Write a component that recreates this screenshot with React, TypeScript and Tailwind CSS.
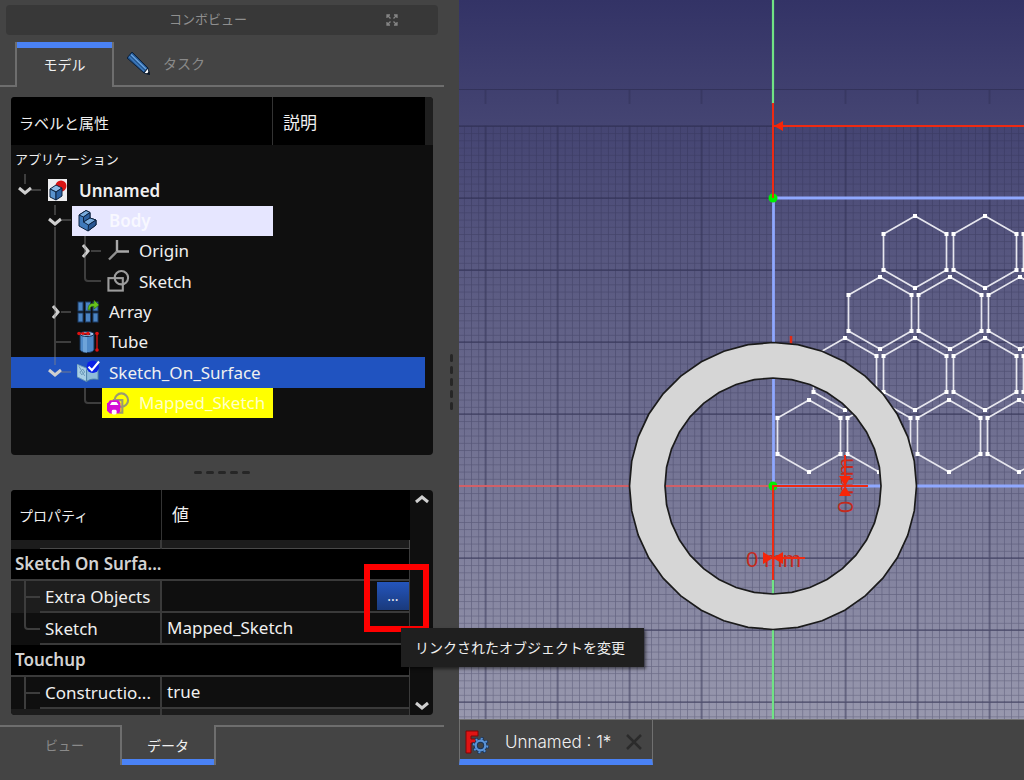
import type { ReactNode } from 'react';

const UI = "font-['Noto_Sans','Noto_Sans_CJK_JP',sans-serif]";

/* ---------- icons ---------- */

function Cube({ x = 0, y = 0 }: { x?: number; y?: number }) {
  return (
    <g transform={`translate(${x} ${y})`} stroke="#0d2340" strokeWidth="1" strokeLinejoin="round">
      <path d="M0 4 6 0 12 3 6 7Z" fill="#8dbbe6" />
      <path d="M0 4 6 7V15L0 12Z" fill="#5a93ce" />
      <path d="M6 7 12 3V11L6 15Z" fill="#2c62a3" />
    </g>
  );
}

function DocIcon() {
  return (
    <svg width="22" height="24" viewBox="0 0 22 24" aria-hidden="true">
      <rect x="1" y="1" width="19" height="22" fill="#eeeef0" />
      <circle cx="14" cy="8" r="5.500" fill="#d81414" />
      <Cube x={3} y={7} />
    </svg>
  );
}

function BodyIcon() {
  return (
    <svg width="22" height="24" viewBox="0 0 22 24" aria-hidden="true">
      <g stroke="#0d2340" strokeLinejoin="round">
        <path d="M2 6 9 1.500 13 3.500V9L19 11V16L11 22 2 17Z" fill="#3f79ba" />
        <path d="M2 6 9 1.500 13 3.500 6.500 8Z" fill="#79abdc" />
        <path d="M6.500 8 13 3.500V9L6.500 13Z" fill="#2c5f9e" />
        <path d="M6.500 13 13 9 19 11 11.500 16Z" fill="#79abdc" />
        <path d="M11.500 16 19 11V16L11 22Z" fill="#2a5793" />
      </g>
    </svg>
  );
}

function OriginIcon() {
  return (
    <svg width="22" height="24" viewBox="0 0 22 24" aria-hidden="true">
      <path d="M10 1V12.500M10 12.500H22" fill="none" stroke="#a8a8a8" strokeWidth="2.400" />
      <path d="M10 12.500 2 20.500" fill="none" stroke="#909090" strokeWidth="2.400" />
    </svg>
  );
}

function SketchIcon() {
  return (
    <svg width="24" height="24" viewBox="0 0 24 24" aria-hidden="true" fill="none" stroke="#9c9c9c" strokeWidth="2.200">
      <rect x="1.500" y="9" width="15" height="13" />
      <circle cx="15" cy="8.500" r="7" />
    </svg>
  );
}

function MappedIcon() {
  return (
    <svg width="24" height="24" viewBox="0 0 24 24" aria-hidden="true">
      <g fill="none" stroke="#9a9a70" strokeWidth="2.200">
        <path d="M6 9H16V22H12" />
        <circle cx="15" cy="9" r="7" />
      </g>
      <path d="M1 12 3 9H12L14 12V20L12 23H3L0 20V12Z" fill="#d40cd4" />
      <path d="M3 14 5 11H10L12 14Z" fill="#fff" />
      <rect x="5" y="19" width="5" height="5" rx="1.500" fill="#fff" />
    </svg>
  );
}

function ArrayIcon() {
  return (
    <svg width="22" height="24" viewBox="0 0 22 24" aria-hidden="true">
      <g fill="#4b84c4" stroke="#1d3c66">
        <rect x="1" y="2" width="5" height="9" />
        <rect x="8.500" y="2" width="5" height="9" />
        <rect x="16" y="2" width="5" height="9" />
        <rect x="1" y="13" width="5" height="9" />
        <rect x="8.500" y="13" width="5" height="9" />
        <rect x="16" y="13" width="5" height="9" />
      </g>
      <path d="M11 10C11 5 13 3 17 3.500V0L22 5 17 9V6.500C14 6 13 7 13 10Z" fill="#66c31a" stroke="#2b5e06" strokeWidth=".6" />
    </svg>
  );
}

function TubeIcon() {
  return (
    <svg width="22" height="24" viewBox="0 0 22 24" aria-hidden="true">
      <path d="M3 4V20C5 23.500 15 23.500 17 20V4Z" fill="#4f89c8" stroke="#163256" />
      <path d="M6 6V22L10 23V6Z" fill="#84b4e4" opacity=".6" />
      <ellipse cx="10" cy="4" rx="7" ry="2.500" fill="#9fc4ea" stroke="#163256" />
      <ellipse cx="10" cy="4" rx="3.500" ry="1.200" fill="#15253b" />
      <path d="M1 3.500H12M20 3.500V20" stroke="#dd1111" strokeWidth="1.300" />
      <g fill="#dd1111">
        <circle cx="2" cy="3.500" r="1.800" />
        <circle cx="6" cy="3.500" r="1.500" />
        <circle cx="11" cy="3.500" r="1.800" />
        <circle cx="20" cy="3.500" r="1.800" />
        <circle cx="20" cy="20" r="1.800" />
      </g>
    </svg>
  );
}

function SurfaceIcon() {
  return (
    <svg width="24" height="24" viewBox="0 0 24 24" aria-hidden="true">
      <path d="M0 4 10 8V22L0 17Z" fill="#a9cfe6" stroke="#6c9bb8" />
      <path d="M10 10C14 7 18 8 22 9V20C18 19 14 19 10 22Z" fill="#8fbcda" stroke="#4d80a5" />
      <path d="M2 6 8 16M3 12 6 9 8 12 5 15Z" fill="none" stroke="#6795b5" />
      <circle cx="16.500" cy="6.500" r="6.500" fill="#0b22e6" />
      <path d="M12 6.500 15.500 10 23 1" fill="none" stroke="#fff" strokeWidth="2.200" />
    </svg>
  );
}

function PencilIcon() {
  return (
    <svg width="24" height="24" viewBox="0 0 24 24" aria-hidden="true">
      <g stroke="#0c1f38" strokeLinejoin="round">
        <path d="M0 6 5 0 21 16 17 21Z" fill="#24568f" />
        <path d="M17 21 21 16 22.500 22.500Z" fill="#fff" />
      </g>
      <path d="M4 2.500 19 17" stroke="#6aa4e0" strokeWidth="1.500" />
      <path d="M2 4.500 17 19" stroke="#3f7cc0" strokeWidth="1.200" />
      <path d="M19.500 22 22.300 19 23 23Z" fill="#0c1420" />
    </svg>
  );
}

function FreeCadIcon() {
  return (
    <svg width="24" height="24" viewBox="0 0 24 24" aria-hidden="true">
      <path d="M1 1H13V6H6V9H11V13H6V23H1Z" fill="#e01414" stroke="#7c0606" />
      <g fill="none" stroke="#16345c">
        <circle cx="15.500" cy="15.500" r="6.800" strokeWidth="3.400" strokeDasharray="2.700 2.640" />
        <circle cx="15.500" cy="15.500" r="4.800" strokeWidth="4" />
      </g>
      <g fill="none" stroke="#5b93d6">
        <circle cx="15.500" cy="15.500" r="6.800" strokeWidth="2" strokeDasharray="2 3.340" />
        <circle cx="15.500" cy="15.500" r="4.800" strokeWidth="2.200" />
      </g>
    </svg>
  );
}

function FloatIcon() {
  return (
    <svg width="12" height="12" viewBox="0 0 12 12" aria-hidden="true" fill="none" stroke="#858585" strokeWidth="1.300">
      <path d="M1 4V1H4M1 1 4.500 4.500M8 1H11V4M11 1 7.500 4.500M1 8V11H4M1 11 4.500 7.500M11 8V11H8M11 11 7.500 7.500" />
    </svg>
  );
}

function Chevron({ dir }: { dir: 'up' | 'down' | 'right' }) {
  const paths = { up: 'M2 10 8 5 14 10', down: 'M2 6 8 11 14 6', right: 'M6 2 11 8 6 14' };
  return (
    <svg width="16" height="16" viewBox="0 0 16 16" aria-hidden="true">
      <path d={paths[dir]} fill="none" stroke="#cfcfcf" strokeWidth="3" />
    </svg>
  );
}

/* ---------- model tree ---------- */

type TreeNodeProps = {
  label: string;
  icon: ReactNode;
  indent: string;
  chevron?: 'down' | 'right';
  row?: string;
  cell?: string;
};

function TreeNode({ label, icon, indent, chevron, row = '', cell = '' }: TreeNodeProps) {
  return (
    <div role="treeitem" className={`mr-[8px] flex ${row}`}>
      <div className={`flex w-[262px] ${indent}`}>
        <div className="mr-[3px] flex w-7 shrink-0 items-center justify-center">
          {chevron && (
            <button type="button" aria-label={`${label} 展開`} className="relative">
              <Chevron dir={chevron} />
            </button>
          )}
        </div>
        <div className={`flex min-w-0 flex-1 items-center gap-[9px] pl-[5px] whitespace-nowrap ${cell}`}>
          <span className="flex w-[23px] shrink-0">{icon}</span>
          {label}
        </div>
      </div>
    </div>
  );
}

function ModelTree() {
  return (
    <section className="mr-[11px] ml-[11px] h-[358px] overflow-hidden rounded bg-[#0f0f0f]">
      <div className="flex h-12 bg-[#1f1f1f] pr-[8px] text-[15px]">
        <div className="flex w-[262px] items-center border-r border-[#333] bg-black pt-1 pl-2">ラベルと属性</div>
        <div className="flex flex-1 items-center bg-black pt-1 pl-[10px] text-[17px]">説明</div>
      </div>
      <div role="tree" aria-label="モデルツリー" className="relative grid h-[273px] grid-rows-9 text-[17px]">
        <div className="flex items-center pl-1 text-[13px]">アプリケーション</div>
        <TreeNode label="Unnamed" icon={<DocIcon />} indent="pl-0" chevron="down" cell="font-semibold" />
        <TreeNode
          label="Body"
          icon={<BodyIcon />}
          indent="pl-[30px]"
          chevron="down"
          cell="bg-[#e6e6ff] font-semibold text-[#f8f8ff]"
        />
        <TreeNode label="Origin" icon={<OriginIcon />} indent="pl-[60px]" chevron="right" />
        <TreeNode label="Sketch" icon={<SketchIcon />} indent="pl-[60px]" />
        <TreeNode label="Array" icon={<ArrayIcon />} indent="pl-[30px]" chevron="right" />
        <TreeNode label="Tube" icon={<TubeIcon />} indent="pl-[30px]" />
        <TreeNode
          label="Sketch_On_Surface"
          icon={<SurfaceIcon />}
          indent="pl-[30px]"
          chevron="down"
          row="bg-[#2053c0]"
        />
        <TreeNode
          label="Mapped_Sketch"
          icon={<MappedIcon />}
          indent="pl-[60px]"
          cell="bg-[#ffff00] text-[#ffffc8]"
        />
        <svg
          className="pointer-events-none absolute top-0 left-0"
          width="120"
          height="273"
          aria-hidden="true"
          fill="none"
          stroke="#858585"
          strokeOpacity=".4"
          strokeWidth="2"
        >
          <path d="M14 29V39M20 45H30M44 60V70M44 82V220M51 75H60M50 167H60M44 197H60M50 227H60M74 91V133Q74 136 77 136H90M80 106H90M74 243V255Q74 258 77 258H90" />
        </svg>
      </div>
    </section>
  );
}

/* ---------- property editor ---------- */

function PropRow({ name, value, last, shade = '' }: { name: string; value: ReactNode; last?: boolean; shade?: string }) {
  return (
    <tr className="h-8">
      <th scope="row" className={`relative border-r-2 border-[#3a3a3a] p-0 text-left font-normal ${shade}`}>
        <svg
          className="absolute top-0 left-[13px]"
          width="18"
          height="32"
          aria-hidden="true"
          fill="none"
          stroke="#3d3d3d"
          strokeWidth="2"
        >
          <path d={last ? 'M1 0V13Q1 16 4 16H16' : 'M1 0V32M1 16H16'} />
        </svg>
        <div className="ml-[29px] h-8 truncate border-b-2 border-[#3a3a3a] pl-[5px] leading-8">{name}</div>
      </th>
      <td className="border-r border-b-2 border-[#3a3a3a] p-0 pl-[5px]">{value}</td>
    </tr>
  );
}

function GroupRow({ name }: { name: string }) {
  return (
    <tr className="h-8">
      <th
        colSpan={2}
        scope="colgroup"
        className="border-r border-b-2 border-[#3a3a3a] bg-black p-0 pl-1 text-left font-semibold text-[#d2d2d2]"
      >
        <div className="w-[148px] truncate">{name}</div>
      </th>
    </tr>
  );
}

function PropertyEditor() {
  return (
    <section className="relative mr-[11px] ml-[11px]">
      <div className="flex h-[225px] overflow-hidden rounded bg-[#0f0f0f]">
        <table className="h-fit w-[399px] table-fixed border-separate border-spacing-0 text-[17px]">
          <colgroup>
            <col className="w-[151px]" />
            <col />
          </colgroup>
          <thead>
            <tr className="h-[50px] bg-black">
              <th className="border-r border-[#333] p-0 pl-2 text-left text-[14px] font-normal">プロパティ</th>
              <th className="p-0 pl-[10px] text-left font-normal">値</th>
            </tr>
          </thead>
          <tbody>
            <tr className="h-[9px] bg-[#1c1c1c]">
              <td className="border-r-2 border-[#3a3a3a] p-0">
                <div className="ml-[29px] h-[9px] border-b border-[#4a4a4a]" />
              </td>
              <td className="border-r border-b border-[#4a4a4a] p-0" />
            </tr>
            <GroupRow name="Sketch On Surfa..." />
            <PropRow
              name="Extra Objects"
              shade="bg-[#1d1d1d]"
              value={
                <button
                  type="button"
                  aria-label="リンクされたオブジェクトを変更"
                  className="ml-auto block h-7 w-8 bg-linear-to-b from-[#2455bd] to-[#1a3a7c] text-[14px] leading-7"
                >
                  ...
                </button>
              }
            />
            <PropRow name="Sketch" value="Mapped_Sketch" last />
            <GroupRow name="Touchup" />
            <PropRow name="Constructio..." value="true" />
            <tr className="h-2 bg-[#1c1c1c]">
              <td className="border-r-2 border-[#3a3a3a] p-0" />
              <td className="border-r border-[#3a3a3a] p-0" />
            </tr>
          </tbody>
        </table>
        <div className="flex flex-1 flex-col items-center justify-between py-[2px]">
          <button type="button" aria-label="上へスクロール">
            <Chevron dir="up" />
          </button>
          <button type="button" aria-label="下へスクロール">
            <Chevron dir="down" />
          </button>
        </div>
      </div>
      <div className="pointer-events-none absolute top-[74px] left-[353px] h-[68px] w-[65px] border-[6px] border-[#ff0000]" />
      <div
        role="tooltip"
        className="absolute top-[138px] left-[390px] z-10 flex h-[39px] w-[243px] items-center bg-[#1f1f1f] pl-[14px] text-[14px] whitespace-nowrap shadow-[2px_2px_3px_rgba(0,0,0,0.5)]"
      >
        リンクされたオブジェクトを変更
      </div>
    </section>
  );
}

/* ---------- 3D view ---------- */

const CX = 773;
const CY = 486;

const ringPolygon = (r: number) =>
  'M' +
  Array.from({ length: 36 }, (_, i) => {
    const a = (i * Math.PI) / 18;
    return `${(CX + r * Math.cos(a)).toFixed(1)} ${(CY + r * Math.sin(a)).toFixed(1)}`;
  }).join('L') +
  'Z';

const hexRows = [
  { x: 915, y: 252, n: 8 },
  { x: 880, y: 313, n: 8 },
  { x: 845, y: 374, n: 9 },
  { x: 809, y: 436, n: 9 },
];

function Hexagon({ x, y }: { x: number; y: number }) {
  const pts = [
    [x, y - 36],
    [x + 31.5, y - 18],
    [x + 31.5, y + 18],
    [x, y + 36],
    [x - 31.5, y + 18],
    [x - 31.5, y - 18],
  ];
  return (
    <g>
      <polygon points={pts.map((p) => p.join(',')).join(' ')} fill="none" stroke="#e6e6ee" strokeWidth="1.700" />
      {pts.map(([px, py], i) => (
        <rect key={i} x={px - 2} y={py - 2} width="4" height="4" fill="#fff" />
      ))}
    </g>
  );
}

function Viewport() {
  return (
    <svg className="block min-h-[719px] w-full flex-1" role="img" aria-label="3Dビュー">
      <defs>
        <linearGradient id="sky" x1="0" y1="0" x2="0" y2="1">
          <stop offset="0" stopColor="#333366" />
          <stop offset="1" stopColor="#9898ae" />
        </linearGradient>
        <pattern id="minor" x="773.500" y="126" width="7.200" height="7.200" patternUnits="userSpaceOnUse">
          <path d="M0 0H7.200M0 0V7.200" stroke="#28284a" strokeOpacity=".38" strokeWidth="1.400" />
        </pattern>
        <pattern id="major" x="737.500" y="90" width="72" height="72" patternUnits="userSpaceOnUse">
          <path d="M36 0V72M0 36H72" stroke="#28284a" strokeOpacity=".5" strokeWidth="1.400" />
        </pattern>
        <pattern id="ticks" x="737.500" y="90" width="72" height="14" patternUnits="userSpaceOnUse">
          <path d="M36 0V14" stroke="#28284a" strokeOpacity=".55" strokeWidth="1.300" />
        </pattern>
      </defs>
      <rect width="100%" height="100%" fill="url(#sky)" />
      <g transform="translate(-459 0)">
        <rect x="459" y="126" width="3000" height="2000" fill="url(#minor)" />
        <rect x="459" y="125" width="3000" height="2000" fill="url(#major)" />
        <rect x="459" y="90" width="3000" height="14" fill="url(#ticks)" />
        <path d="M459 89.500H3000" stroke="#28284a" strokeOpacity=".55" />

        <path d="M459 486H773" stroke="#d06068" strokeWidth="1.800" />
        <path d="M773 0V104M773 580V2000" stroke="#70e484" strokeWidth="2.200" />
        {hexRows.flatMap((r) =>
          Array.from({ length: r.n }, (_, i) => <Hexagon key={`${r.y}-${i}`} x={r.x + i * 70} y={r.y} />),
        )}
        <path d="M3000 198H773.500V486H3000" fill="none" stroke="#8fa8ff" strokeWidth="2.800" />
        <path d="M791 336V344" stroke="#e22a14" strokeWidth="2.500" />

        <path d={ringPolygon(143.5) + ringPolygon(108)} fillRule="evenodd" fill="#d6d6d6" stroke="#1b1b1b" strokeWidth="1.700" />

        <circle cx="773" cy="198" r="4.500" fill="#00f000" />
        <circle cx="773" cy="486" r="4.500" fill="#00f000" />

        <g fill="#c32a1c" fontFamily="Liberation Sans, Arial, sans-serif" fontSize="22">
          <text x="746" y="567">0 mm</text>
          <text transform="translate(853 513) rotate(-90)">0 mm</text>
        </g>
        <path d="M773 103V198M773 126H3000M773 580V486H868M773 558H805M845 455V486" fill="none" stroke="#ee2a12" strokeWidth="2" />
        <path
          d="M774 126 783 121V131ZM773 558 763 552V564ZM773 558 783 552V564ZM845 486 839 476H851ZM845 486 839 496H851Z"
          fill="#f62508"
        />
      </g>
    </svg>
  );
}

/* ---------- page ---------- */

export default function App() {
  return (
    <div className={`flex min-h-screen bg-[#444] text-[#f0f0f0] ${UI}`}>
      <aside className="flex w-[459px] shrink-0">
        <div className="flex w-[444px] flex-col">
          <header className="mx-[6px] mt-[5px] flex h-[30px] items-center rounded bg-[#383838] text-[#8f8f8f]">
            <h1 className="flex-1 pl-[24px] text-center text-[13px]">コンボビュー</h1>
            <button type="button" aria-label="フロート" className="mr-[40px]">
              <FloatIcon />
            </button>
          </header>

          <div role="tablist" className="mt-[7px] flex h-[45px] text-[14px]">
            <div className="w-[15px] border-b-2 border-[#6e6e6e]" />
            <button
              type="button"
              role="tab"
              aria-selected="true"
              className="w-[99px] border-x-2 border-[#6e6e6e] shadow-[inset_0_6px_0_#4a82f5]"
            >
              モデル
            </button>
            <button
              type="button"
              role="tab"
              aria-selected="false"
              className="flex flex-1 items-center gap-[12px] border-b-2 border-[#6e6e6e] pl-[13px] text-[#8a8a8a]"
            >
              <PencilIcon />
              タスク
            </button>
          </div>

          <div className="mt-[10px] flex flex-col">
            <ModelTree />
            <div className="flex h-[35px] items-center justify-center gap-1">
              {[0, 1, 2, 3, 4].map((i) => (
                <span key={i} className="h-[3px] w-2 rounded-sm bg-[#262626]" />
              ))}
            </div>
            <PropertyEditor />
          </div>

          <div role="tablist" className="mt-[10px] flex h-10 text-[13px]">
            <button
              type="button"
              role="tab"
              aria-selected="false"
              className="w-[120px] border-t-2 border-[#6e6e6e] pl-[9px] text-[#8a8a8a]"
            >
              ビュー
            </button>
            <button
              type="button"
              role="tab"
              aria-selected="true"
              className="w-[96px] border-x-2 border-[#6e6e6e] text-[14px] shadow-[inset_0_-6px_0_#4a82f5]"
            >
              データ
            </button>
            <div className="flex-1 border-t-2 border-[#6e6e6e]" />
          </div>
        </div>
        <div className="flex flex-1 flex-col items-center gap-1 pt-[354px]">
          {[0, 1, 2, 3, 4].map((i) => (
            <span key={i} className="h-2 w-[3px] rounded-sm bg-[#262626]" />
          ))}
        </div>
      </aside>

      <main className="flex min-w-0 flex-1 flex-col">
        <Viewport />
        <div className="flex h-[61px] border-t border-[#707070]">
          <div className="flex h-[45px] w-[194px] items-center border-x border-b-[6px] border-x-[#707070] border-b-[#4a82f5] pt-1 pl-[5px]">
            <FreeCadIcon />
            <span className="w-[137px] pt-[2px] pl-4 font-['Inter','Open_Sans',sans-serif] text-[17px] font-light whitespace-nowrap">
              Unnamed : 1*
            </span>
            <button type="button" aria-label="閉じる">
              <svg width="16" height="16" viewBox="0 0 16 16" aria-hidden="true">
                <path d="M1 1 15 15M15 1 1 15" stroke="#2b2b2b" strokeWidth="2.500" />
              </svg>
            </button>
          </div>
        </div>
      </main>
    </div>
  );
}
